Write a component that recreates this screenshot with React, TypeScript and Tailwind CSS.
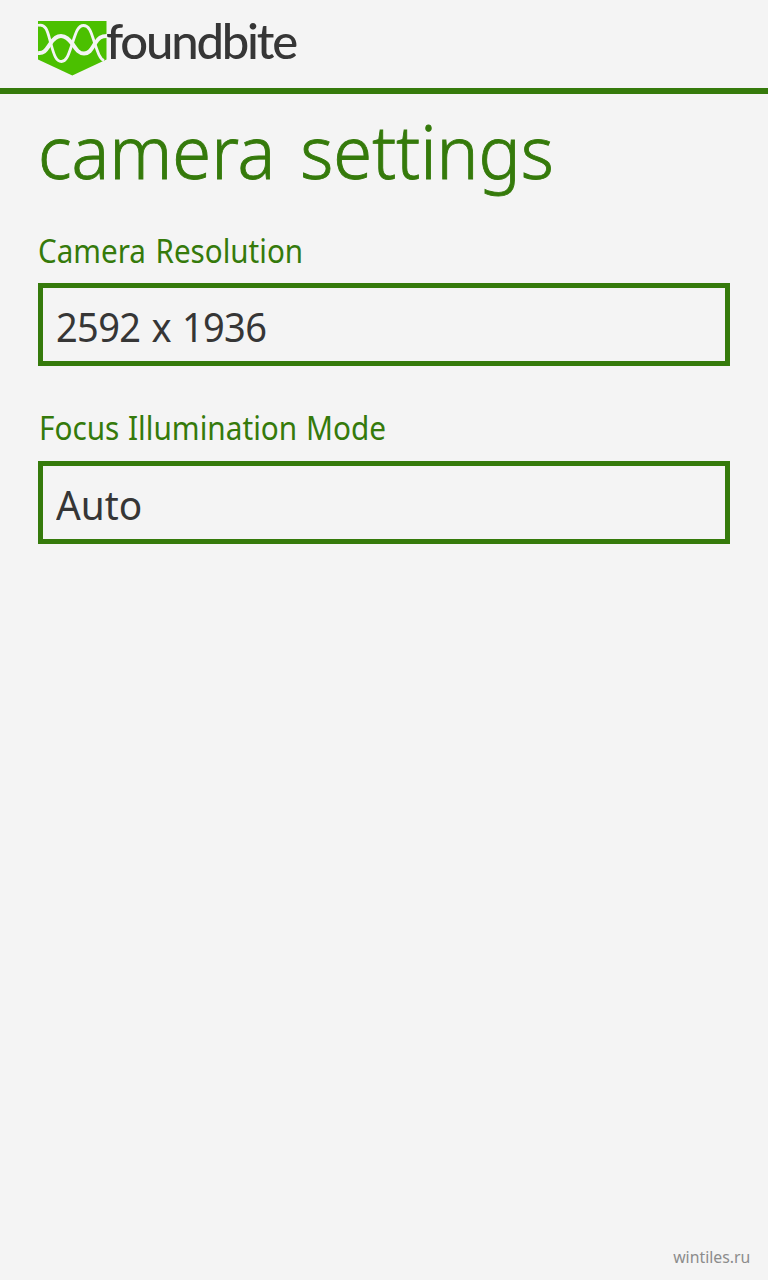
function Logo() {
  return (
    <div className="flex items-start">
      <svg className="h-[56px] w-[69px] shrink-0" viewBox="0 0 69 56">
        <path d="M0 0H68.5V38.5L34.3 54.5L0 38.5Z" fill="#4bc000" />
        <g fill="none" stroke="#f4f4f4">
          <path
            strokeWidth="2.8"
            d="M0 4.500C9 2 10 13 13 23C16 34 18 40.500 23.500 40.500C29 40.500 31 32 34.500 22C38 11 40 4.500 45.500 4.500C52 4.500 53.500 13 57 23C60 32 62 38 66 39.500"
          />
          <path
            strokeWidth="4"
            d="M0 32C7 33 9 27 12.500 22.500C16 17 18.500 15 23 15C28 15 31 18.500 34.500 23C38 28 40.500 32.500 46 32.500C51.500 32.500 53.500 28 57 22.500C60.500 17 63 15 69 15"
          />
        </g>
      </svg>
      <span className="-ml-px font-[Lato] text-[49px] leading-[38px] font-medium tracking-[-2.2px] text-[#363636]">
        foundbite
      </span>
    </div>
  )
}

type FieldProps = {
  label: string
  value: string
  labelClass: string
  valueClass: string
}

function Field({ label, value, labelClass, valueClass }: FieldProps) {
  return (
    <div>
      <div className={`origin-left text-[32px] whitespace-nowrap text-[#357a0b] ${labelClass}`}>{label}</div>
      <button
        type="button"
        className="block h-[83px] w-full border-5 border-[#357a0b] pt-1 pl-[13px] text-left text-[40px] leading-[69px] text-[#363636]"
      >
        <span className={`inline-block origin-left ${valueClass}`}>{value}</span>
      </button>
    </div>
  )
}

export default function App() {
  return (
    <div className="flex h-[1280px] w-[768px] flex-col bg-[#f4f4f4] font-['Noto_Sans',sans-serif]">
      <header className="h-[94px] border-b-6 border-[#357a0b] pt-[21px] pl-[38px]">
        <Logo />
      </header>

      <main className="flex-1 px-[38px] pt-[17px]">
        <h1 className="origin-left scale-x-[0.965] text-[73px] leading-20 font-light whitespace-nowrap text-[#357a0b] [-webkit-text-stroke:0.9px_#357a0b] [word-spacing:7px]">
          camera settings
        </h1>
        <div className="mt-[39px] flex flex-col gap-[42px]">
          <Field
            label="Camera Resolution"
            value="2592 x 1936"
            labelClass="mb-3 pt-px leading-10 scale-x-[0.925] [word-spacing:2px]"
            valueClass="scale-x-[0.95] tracking-[-0.7px] [word-spacing:2px]"
          />
          <Field
            label="Focus Illumination Mode"
            value="Auto"
            labelClass="mb-[13px] leading-10 pl-px scale-x-[0.93] [word-spacing:1px]"
            valueClass="scale-x-[0.97]"
          />
        </div>
      </main>

      <footer className="origin-right scale-x-[0.93] pr-[19px] pb-[11px] text-right text-[17px] leading-6 text-[#8c8c8c]">
        wintiles.ru
      </footer>
    </div>
  )
}
